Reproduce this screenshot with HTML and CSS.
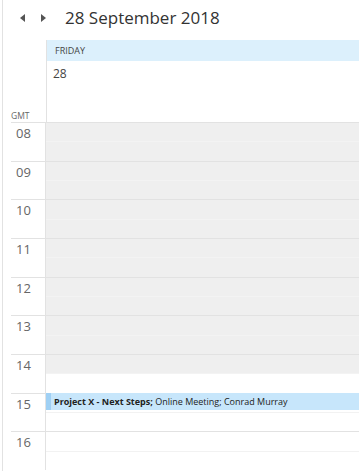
FILE: index.html
```html
<!DOCTYPE html>
<html lang="en">
<head>
    <meta charset="UTF-8">
    <meta name="viewport" content="width=device-width, initial-scale=1.0">
    <title>Calendar - Day</title>
    <link rel="stylesheet" href="styles.css">
</head>
<body>
    <div class="page">
        <div class="toolbar">
            <span class="arrow arrow-left"></span>
            <span class="arrow arrow-right"></span>
            <h1 class="title">28 September 2018</h1>
        </div>

        <div class="head">
            <div class="gutter-head"><span class="gmt">GMT</span></div>
            <div class="day-head">
                <div class="day-name">FRIDAY</div>
                <div class="day-num">28</div>
            </div>
        </div>

        <div class="hour">
            <div class="hour-label"><span>08</span></div>
            <div class="slots"><div class="half busy"></div><div class="half busy"></div></div>
        </div>
        <div class="hour">
            <div class="hour-label"><span>09</span></div>
            <div class="slots"><div class="half busy"></div><div class="half busy"></div></div>
        </div>
        <div class="hour">
            <div class="hour-label"><span>10</span></div>
            <div class="slots"><div class="half busy"></div><div class="half busy"></div></div>
        </div>
        <div class="hour">
            <div class="hour-label"><span>11</span></div>
            <div class="slots"><div class="half busy"></div><div class="half busy"></div></div>
        </div>
        <div class="hour">
            <div class="hour-label"><span>12</span></div>
            <div class="slots"><div class="half busy"></div><div class="half busy"></div></div>
        </div>
        <div class="hour">
            <div class="hour-label"><span>13</span></div>
            <div class="slots"><div class="half busy"></div><div class="half busy"></div></div>
        </div>
        <div class="hour">
            <div class="hour-label"><span>14</span></div>
            <div class="slots"><div class="half busy"></div><div class="half"></div></div>
        </div>
        <div class="hour">
            <div class="hour-label"><span>15</span></div>
            <div class="slots">
                <div class="half">
                    <div class="event"><b>Project X - Next Steps;</b> Online Meeting; Conrad Murray</div>
                </div>
                <div class="half"></div>
            </div>
        </div>
        <div class="hour">
            <div class="hour-label"><span>16</span></div>
            <div class="slots"><div class="half"></div><div class="half"></div></div>
        </div>
    </div>
</body>
</html>
```

FILE: styles.css
```css
body {
    margin: 0;
    font-family: "Open Sans", "Noto Sans", sans-serif;
    color: #444;
    background-color: #fff;
    overflow: hidden;
}
.page {
    margin-left: 2px;
    border-left: 1px solid #e2e2e2;
    min-height: 471px;
}
.toolbar {
    height: 40px;
    display: flex;
    align-items: center;
    padding-left: 17px;
}
.arrow {
    width: 0;
    height: 0;
    border-top: 4px solid transparent;
    border-bottom: 4px solid transparent;
    margin-top: -4px;
}
.arrow-left {
    border-right: 5px solid #555;
}
.arrow-right {
    border-left: 5px solid #555;
    margin-left: 16px;
}
.title {
    margin: -5px 0 0 19px;
    font-size: 17px;
    font-weight: normal;
    color: #333;
}
.head {
    display: flex;
    height: 82px;
}
.gutter-head {
    width: 43px;
    border-right: 1px solid #e2e2e2;
    display: flex;
    align-items: flex-end;
}
.gmt {
    font-size: 8.5px;
    color: #666;
    margin-left: 8px;
    margin-bottom: 1px;
}
.day-head {
    flex: 1;
}
.day-name {
    height: 21px;
    background-color: #dcf0fc;
    font-size: 9px;
    line-height: 21px;
    padding-left: 8px;
    color: #444;
}
.day-num {
    font-size: 12px;
    padding-left: 6px;
    padding-top: 4px;
    color: #444;
}
.hour {
    display: flex;
    height: 38.67px;
}
.hour-label {
    width: 35px;
    margin-left: 8px;
    border-top: 1px solid #e2e2e2;
    border-right: 1px solid #e2e2e2;
    box-sizing: border-box;
}
.hour-label span {
    display: block;
    font-size: 13px;
    color: #666;
    padding-left: 5px;
    padding-top: 1px;
    line-height: 18px;
}
.slots {
    flex: 1;
    display: flex;
    flex-direction: column;
    border-top: 1px solid #e2e2e2;
}
.half {
    flex: 1;
}
.half:first-child {
    border-bottom: 1px solid #f2f2f2;
}
.busy {
    background-color: #efefef;
}
.busy:first-child {
    border-bottom-color: #f3f3f3;
}
.event {
    height: 17px;
    margin-top: -1px;
    background-color: #c7e6fb;
    border-left: 5px solid #9fd0f4;
    font-size: 9px;
    line-height: 17px;
    padding-left: 3px;
    color: #222;
    white-space: nowrap;
    overflow: hidden;
}
```
